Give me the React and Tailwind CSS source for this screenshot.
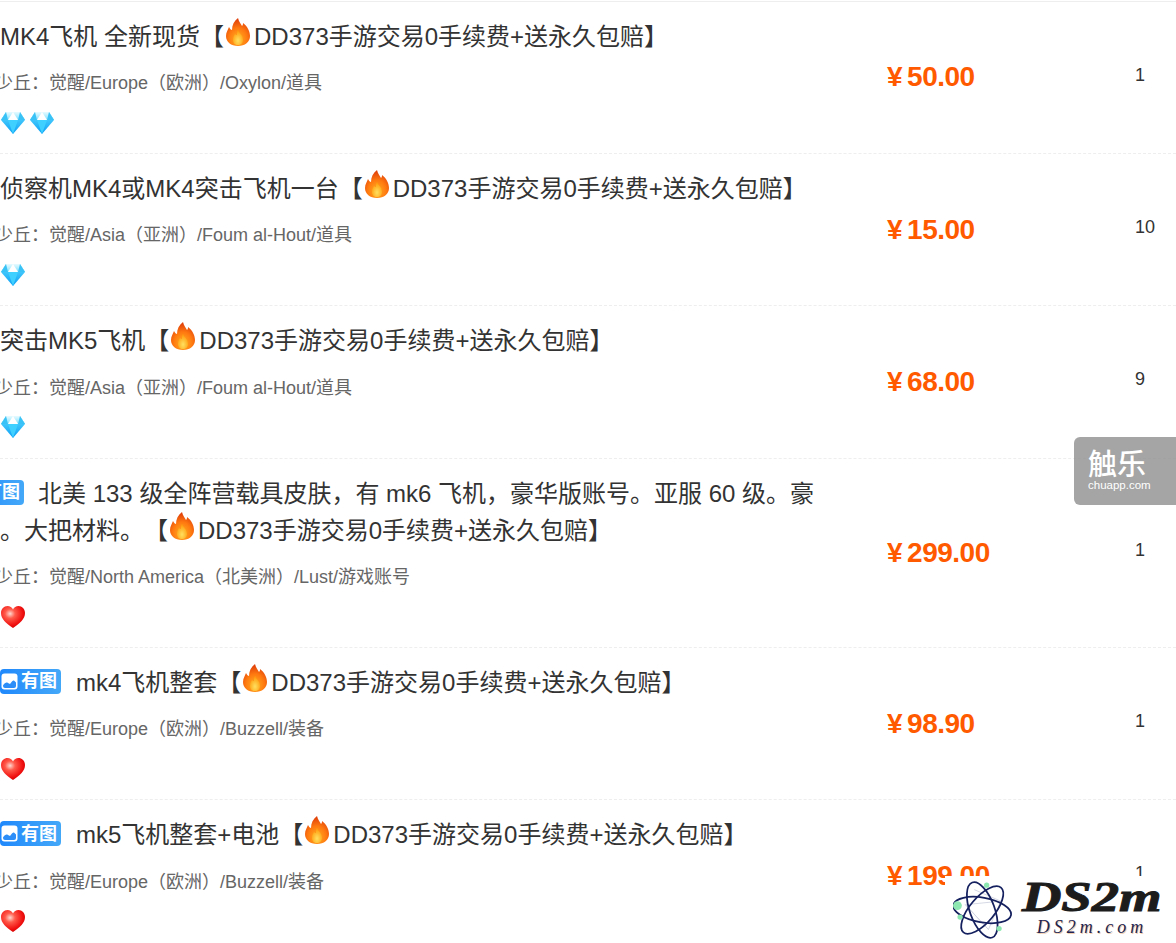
import React from "react";

function Flame() {
  return (
    <svg viewBox="0 0 26 30" className="inline-block w-[26px] h-[30px] align-[-2px] -mt-3 ml-[1px] mr-[3px]">
      <defs>
        <radialGradient id="fo" cx="50%" cy="75%" r="70%">
          <stop offset="0%" stopColor="#ffb020" />
          <stop offset="55%" stopColor="#ff7a10" />
          <stop offset="100%" stopColor="#e0400a" />
        </radialGradient>
        <radialGradient id="fi" cx="50%" cy="70%" r="60%">
          <stop offset="0%" stopColor="#ffe060" />
          <stop offset="100%" stopColor="#ffa010" />
        </radialGradient>
      </defs>
      <path d="M13 1c1 4 3 6 4 8 1-1 1-2 1-3 4 3 7 8 7 13 0 6-5 10-12 10S1 25 1 19c0-4 2-6 3-9 1 2 2 3 3 3 0-5 2-9 6-12z" fill="url(#fo)" />
      <path d="M13 13c1 3 5 5 5 10 0 3-2 5-5 5s-5-2-5-5c0-3 1-4 2-6 1 1 1 1 2 1 0-2 0-3 1-5z" fill="url(#fi)" />
    </svg>
  );
}

function Gem() {
  return (
    <svg viewBox="0 0 26 24" className="w-[26px] h-6 shrink-0">
      <defs>
        <linearGradient id="g1" x1="0" y1="0" x2="0" y2="1">
          <stop offset="0%" stopColor="#5fdcff" />
          <stop offset="100%" stopColor="#0a9ff5" />
        </linearGradient>
        <linearGradient id="g2" x1="0" y1="0" x2="0" y2="1">
          <stop offset="0%" stopColor="#e8fbff" />
          <stop offset="100%" stopColor="#7fe0ff" />
        </linearGradient>
      </defs>
      <path d="M6 1h14l5 8-12 14L1 9z" fill="url(#g1)" />
      <path d="M6 1h14l5 8H1z" fill="url(#g2)" />
      <path d="M13 1l5 8H8z" fill="#ffffff" />
      <path d="M8 9h10l-5 14z" fill="#3fd0ff" />
      <path d="M1 9L6 1l2 8zM25 9l-5-8-2 8z" fill="#39c2f5" />
    </svg>
  );
}

function Heart() {
  return (
    <svg viewBox="0 0 26 24" className="w-[26px] h-6 shrink-0">
      <defs>
        <radialGradient id="h1" cx="38%" cy="35%" r="70%">
          <stop offset="0%" stopColor="#ffd8d0" />
          <stop offset="30%" stopColor="#ff5a4a" />
          <stop offset="75%" stopColor="#f01010" />
          <stop offset="100%" stopColor="#d00000" />
        </radialGradient>
      </defs>
      <path d="M13 23C6 18 1 14 1 8c0-4 3-7 6.500-7 2.500 0 4.500 1.500 5.500 3.500C14 2.500 16 1 18.500 1 22 1 25 4 25 8c0 6-5 10-12 15z" fill="url(#h1)" />
    </svg>
  );
}

function ImgIcon() {
  return (
    <svg viewBox="0 0 17 17" className="w-[17px] h-[17px] shrink-0">
      <rect x="0.500" y="0.500" width="16" height="16" rx="3" fill="#fff" />
      <path d="M2 12.500c2-3 3.500-3.500 5-2.500l2 1c1.500-2 3-4 4-3.500l2 2V13a2 2 0 0 1-2 2H4a2 2 0 0 1-2-2z" fill="#2b8ef8" />
    </svg>
  );
}

function Badge({ cut }) {
  return (
    <span className={cut
      ? "inline-flex items-center gap-[3px] pl-[1px] h-[25px] w-[61px] rounded-[4px] bg-gradient-to-r from-[#1f88fb] to-[#44a8f8] text-white text-[18px] font-bold align-[1px] mr-[14px] -ml-[37px]"
      : "inline-flex items-center gap-[3px] pl-[1px] h-[25px] w-[61px] rounded-[4px] bg-gradient-to-r from-[#1f88fb] to-[#44a8f8] text-white text-[18px] font-bold align-[1px] mr-[15px]"}>
      <ImgIcon />
      <span className="leading-none">有图</span>
    </span>
  );
}

const FEE = "DD373手游交易0手续费+送永久包赔】";

const rows = [
  { lines: [<>MK4飞机 全新现货【<Flame />{FEE}</>], sub: "少丘：觉醒/Europe（欧洲）/Oxylon/道具", icons: ["g", "g"], price: "50.00", count: "1" },
  { lines: [<>侦察机MK4或MK4突击飞机一台【<Flame />{FEE}</>], sub: "少丘：觉醒/Asia（亚洲）/Foum al-Hout/道具", icons: ["g"], price: "15.00", count: "10" },
  { lines: [<>突击MK5飞机【<Flame />{FEE}</>], sub: "少丘：觉醒/Asia（亚洲）/Foum al-Hout/道具", icons: ["g"], price: "68.00", count: "9" },
  { lines: [<><Badge cut />北美 133 级全阵营载具皮肤，有 mk6 飞机，豪华版账号。亚服 60 级。豪</>, <>。大把材料。【<Flame />{FEE}</>], sub: "少丘：觉醒/North America（北美洲）/Lust/游戏账号", icons: ["h"], price: "299.00", count: "1" },
  { lines: [<><Badge />mk4飞机整套【<Flame />{FEE}</>], sub: "少丘：觉醒/Europe（欧洲）/Buzzell/装备", icons: ["h"], price: "98.90", count: "1" },
  { lines: [<><Badge />mk5飞机整套+电池【<Flame />{FEE}</>], sub: "少丘：觉醒/Europe（欧洲）/Buzzell/装备", icons: ["h"], price: "199.00", count: "1" },
];

function Row({ r }) {
  return (
    <div className="flex items-center border-b border-dashed border-[#eeeeee] last:border-b-0">
      <div className="w-[887px] shrink-0 pt-[16px] pb-[18.330px]">
        {r.lines.map((l, k) => (
          <div key={k} className="text-[24px] leading-[37px] text-[#333333] whitespace-nowrap [text-spacing-trim:space-all]">{l}</div>
        ))}
        <div className="text-[18px] leading-[26px] text-[#666666] -ml-[5px] mt-[15.500px] whitespace-nowrap [text-spacing-trim:space-all]">{r.sub}</div>
        <div className="flex gap-[3px] mt-[14.500px] h-6 items-center">
          {r.icons.map((t, k) => (t === "g" ? <Gem key={k} /> : <Heart key={k} />))}
        </div>
      </div>
      <div className="w-[248px] shrink-0 text-[28px] font-bold text-[#ff5a00] leading-none tracking-[-0.5px]">
        <span className="mr-[5px]">¥</span>{r.price}
      </div>
      <div className="text-[18px] text-[#333333] leading-none -mt-[5px]">{r.count}</div>
    </div>
  );
}

function Atom() {
  return (
    <svg viewBox="0 0 70 66" className="w-[62px] h-[62px] shrink-0">
      <g fill="none" stroke="#cfd3e0" strokeWidth="1">
        <path d="M14 27l40-4-14 32zM14 27l26 28M54 23L24 10" />
      </g>
      <g fill="none" stroke="#15205f" strokeWidth="2">
        <ellipse cx="33" cy="33" rx="14" ry="33" transform="rotate(-20 33 33)" />
        <ellipse cx="33" cy="33" rx="14" ry="33" transform="rotate(40 33 33)" />
        <ellipse cx="33" cy="33" rx="14" ry="33" transform="rotate(100 33 33)" />
      </g>
      <circle cx="5" cy="28" r="5" fill="#8ce8b0" />
      <circle cx="8" cy="41" r="3" fill="#8ce8b0" />
      <circle cx="38" cy="5" r="3" fill="#8ce8b0" />
      <circle cx="52" cy="54" r="3" fill="#8ce8b0" />
    </svg>
  );
}

export default function App() {
  return (
    <div className="relative h-[943px] w-[1176px] overflow-hidden bg-white font-['Liberation_Sans','Noto_Sans_CJK_SC',sans-serif]">
      <div className="pt-[0.670px]">
        <div className="border-t border-[#eeeeee]">
          {rows.map((r, i) => <Row key={i} r={r} />)}
        </div>
      </div>

      <div className="absolute right-0 top-[437px] w-[102px] h-[68px] rounded-l-[6px] bg-[#8f8f8f]/80 flex flex-col items-start pl-[14px] pt-[9px] text-white">
        <div className="text-[29px] leading-[32px] font-medium font-['Noto_Sans_CJK_SC',sans-serif]">触乐</div>
        <div className="text-[11.500px] leading-[14px]">chuapp.com</div>
      </div>

      <div className="absolute left-[945px] top-[876px] w-[231px] h-[67px] bg-white flex items-start pl-[8px] pt-[3px]">
        <Atom />
        <div className="flex flex-col items-center ml-[4px] w-[146px] shrink-0">
          <div className="text-[42px] leading-[36px] font-bold italic text-[#1c1c1c] font-['Liberation_Serif',serif] scale-x-[1.3] origin-center [-webkit-text-stroke:1px_#1c1c1c]">DS2m</div>
          <div className="text-[18px] leading-[18px] mt-[3px] italic text-[#23234f] tracking-[4px] font-['Liberation_Serif',serif] [text-shadow:1px_1px_0_#f3cfae]">DS2m.com</div>
        </div>
      </div>
    </div>
  );
}
